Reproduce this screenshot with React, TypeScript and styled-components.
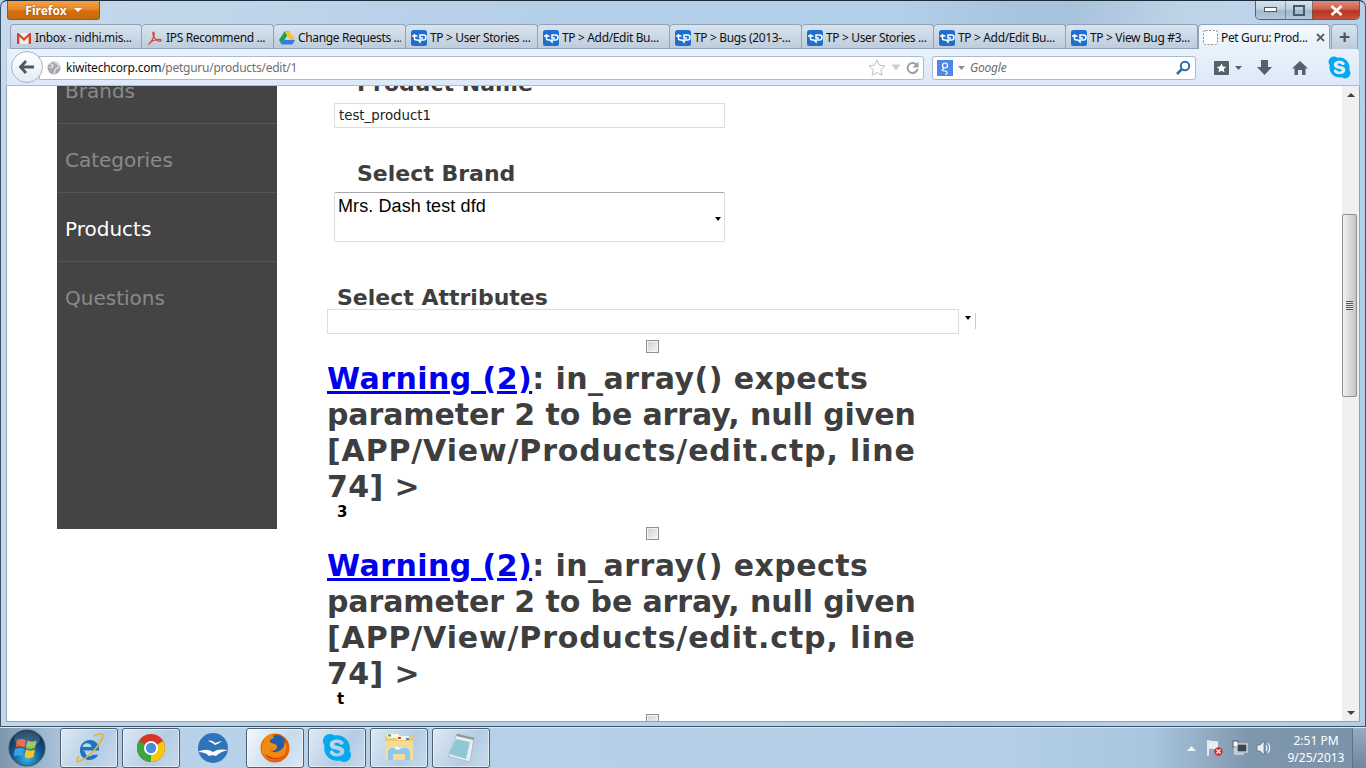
import React from 'react';
import styled, { createGlobalStyle } from 'styled-components';
import { FaSkype } from 'react-icons/fa';

const GlobalStyle = createGlobalStyle`
  html, body { margin: 0; padding: 0; height: 100%; overflow: hidden; }
  body { font-family: "DejaVu Sans", sans-serif; background: #b4cfe8; }
  * { box-sizing: border-box; }
`;

const Desktop = styled.div`
  width: 1366px;
  height: 768px;
  display: flex;
  flex-direction: column;
  overflow: hidden;
`;

const Win = styled.div`
  height: 727px;
  display: flex;
  flex-direction: column;
  padding: 0 5px 4px;
  border-top: 1px solid #1d2a38;
  border-left: 1px solid #3e5266;
  border-right: 1px solid #3e5266;
  border-bottom: 1px solid #3e5266;
  border-radius: 7px 7px 0 0;
  background:
    linear-gradient(115deg, transparent 0 60%, rgba(255,255,255,.18) 70%, transparent 78%),
    linear-gradient(100deg, #c6d9ec 0%, #b6d0e8 35%, #b4cfe8 60%, #a3bfd9 72%, #b8d2ea 85%, #b2cde6 100%);
`;

const TitleBar = styled.div`
  height: 23px;
  display: flex;
  justify-content: space-between;
  align-items: flex-start;
  flex: none;
`;

const FirefoxMenu = styled.div`
  width: 93px;
  height: 19px;
  margin-left: 1px;
  display: flex;
  align-items: center;
  justify-content: center;
  gap: 7px;
  border: 1px solid #8d5a22;
  border-top: none;
  border-radius: 0 0 3px 3px;
  background: linear-gradient(#f3a14b 0%, #e9882a 45%, #d46f0e 55%, #c96a0d 100%);
  color: #fff;
  font: bold 12px "Noto Sans", sans-serif;
  text-shadow: 0 0 2px #8d4a08;
`;

const MenuCaret = styled.span`
  width: 0;
  height: 0;
  border-left: 4px solid transparent;
  border-right: 4px solid transparent;
  border-top: 4px solid #fff;
`;

const WinControls = styled.div`
  display: flex;
  height: 19px;
  margin-right: 0;
  border: 1px solid #4d6378;
  border-top: none;
  border-radius: 0 0 5px 5px;
  overflow: hidden;
`;

const WinButton = styled.div<{ $close?: boolean; $w: number }>`
  width: ${(p) => p.$w}px;
  display: flex;
  align-items: center;
  justify-content: center;
  border-left: 1px solid rgba(70, 90, 110, 0.5);
  background: ${(p) =>
    p.$close
      ? 'linear-gradient(#dd8a7c 0%, #cf5f4d 45%, #b93420 55%, #c4513a 100%)'
      : 'linear-gradient(#d7e3ef 0%, #bccfe1 45%, #a2b8cd 55%, #b6c9da 100%)'};
  &:first-child { border-left: none; }
`;

const TabStrip = styled.div`
  height: 25px;
  display: flex;
  padding-left: 4px;
  flex: none;
`;

const Tab = styled.div<{ $active?: boolean }>`
  width: 132px;
  height: 25px;
  display: flex;
  align-items: center;
  gap: 3px;
  padding: 1px 4px 0 ${(p) => (p.$active ? 4 : 5)}px;
  border: 1px solid #8ea3b8;
  border-left-width: ${(p) => (p.$active ? 1 : 0)}px;
  border-bottom: none;
  border-radius: 4px 4px 0 0;
  background: ${(p) =>
    p.$active ? 'linear-gradient(#f3f8fd, #e8f1fb)' : 'linear-gradient(#d9e4ef, #bccbdb)'};
  box-shadow: ${(p) => (p.$active ? 'none' : 'inset 0 -1px 0 #8fa5ba')};
  font: 12px "Noto Sans", sans-serif;
  letter-spacing: -0.35px;
  color: #111;
  white-space: nowrap;
  &:first-child { border-left-width: 1px; }
`;

const TabLabel = styled.span`
  flex: 1;
  overflow: hidden;
`;

const NewTab = styled.div`
  width: 27px;
  height: 25px;
  margin-left: 1px;
  display: flex;
  align-items: center;
  justify-content: center;
  border: 1px solid #8ea3b8;
  border-bottom: none;
  border-radius: 4px 4px 0 0;
  background: linear-gradient(#d9e4ef, #bccbdb);
  font: bold 19px "Liberation Sans", sans-serif;
  color: #4a5460;
`;

const Toolbar = styled.div`
  height: 37px;
  flex: none;
  display: flex;
  align-items: center;
  gap: 8px;
  padding: 1px 0 0 32px;
  position: relative;
  border: 1px solid #b4c8dc;
  border-top: none;
  border-bottom: 1px solid #a4bfda;
  border-radius: 0 4px 0 0;
  background: linear-gradient(#e9f2fc, #dce9f8);
`;

const BackButton = styled.div`
  position: absolute;
  left: 4px;
  top: 2px;
  width: 32px;
  height: 32px;
  border-radius: 50%;
  border: 1px solid #a4b6c8;
  background: linear-gradient(#fff, #e5ecf4);
  display: flex;
  align-items: center;
  justify-content: center;
`;

const UrlBar = styled.div`
  width: 885px;
  height: 24px;
  display: flex;
  align-items: center;
  padding: 0 4px 0 7px;
  background: #fff;
  border: 1px solid #a9bccf;
  border-radius: 0 3px 3px 0;
  font: 12px "Noto Sans", sans-serif;
  letter-spacing: -0.25px;
`;

const Host = styled.span`
  color: #111;
  margin-left: 5px;
`;

const UrlPath = styled.span`
  color: #6f6f6f;
  flex: 1;
`;

const UrlIcons = styled.div`
  display: flex;
  align-items: center;
  gap: 5px;
`;

const SearchBar = styled.div`
  width: 264px;
  height: 24px;
  display: flex;
  align-items: center;
  gap: 5px;
  padding: 0 4px 0 4px;
  background: #fff;
  border: 1px solid #a9bccf;
  border-radius: 3px;
`;

const SearchHint = styled.span`
  flex: 1;
  font: italic 12px "Noto Sans", sans-serif;
  letter-spacing: -0.2px;
  color: #6d6d6d;
`;

const ToolIcons = styled.div`
  display: flex;
  align-items: center;
  margin-left: 5px;
  gap: 0;
`;

const ToolSlot = styled.div<{ $w: number }>`
  width: ${(p) => p.$w}px;
  display: flex;
  justify-content: center;
  align-items: center;
`;

const Viewport = styled.div`
  flex: 1;
  min-height: 0;
  display: flex;
  background: #fff;
  border: 1px solid #8ea3b8;
  border-top: none;
`;

const PageClip = styled.div`
  flex: 1;
  overflow: hidden;
`;

const Page = styled.div`
  display: flex;
  align-items: flex-start;
  padding-left: 50px;
  gap: 50px;
  margin-top: -31px;
`;

const Sidebar = styled.nav`
  width: 220px;
  height: 474px;
  flex: none;
  background: #444444;
`;

const NavItem = styled.div<{ $current?: boolean }>`
  height: 69px;
  display: flex;
  align-items: center;
  padding: 4px 0 0 8px;
  border-bottom: 1px solid #555;
  font-size: 20px;
  color: ${(p) => (p.$current ? '#ffffff' : '#8a8a8a')};
  &:last-child { border-bottom-color: transparent; }
`;

const Main = styled.main`
  width: 649px;
  flex: none;
  color: #3e3e3e;
`;

const FieldLabel = styled.h2<{ $indent: number; $top: number }>`
  margin: ${(p) => p.$top}px 0 0 ${(p) => p.$indent}px;
  font-size: 22px;
  line-height: 26px;
  font-weight: bold;
  color: #3e3e3e;
`;

const TextInput = styled.input`
  display: block;
  width: 391px;
  height: 25px;
  margin: 6px 0 0 7px;
  padding: 0 4px;
  border: 1px solid #dddddd;
  outline: none;
  font: 13.33px "DejaVu Sans", sans-serif;
  color: #222;
`;

const BrandSelect = styled.div`
  width: 391px;
  height: 50px;
  margin: 5px 0 0 7px;
  padding: 2px 3px;
  position: relative;
  border: 1px solid #dddddd;
  border-top-color: #a9a9a9;
  border-radius: 2px;
  font: 18px/22px "Liberation Sans", sans-serif;
  letter-spacing: 0.1px;
  color: #000;
`;

const Caret = styled.span`
  position: absolute;
  right: 3px;
  top: 24px;
  width: 0;
  height: 0;
  border-left: 3px solid transparent;
  border-right: 3px solid transparent;
  border-top: 4px solid #000;
`;

const AttrRow = styled.div`
  display: flex;
  height: 25px;
  margin-top: -2px;
`;

const AttrField = styled.div`
  width: 632px;
  height: 25px;
  border: 1px solid #dddddd;
`;

const AttrArrow = styled.div`
  width: 17px;
  height: 16px;
  border-right: 1px solid #ccc;
  margin-top: 4px;
  position: relative;
  ${Caret} { left: 6px; right: auto; top: 3px; }
`;

const CheckLine = styled.div`
  display: flex;
  justify-content: center;
  height: 13px;
  margin-top: 6px;
  padding-left: 1px;
`;

const Check = styled.input`
  appearance: none;
  width: 13px;
  height: 13px;
  margin: 0;
  border: 1px solid #8e8f8f;
  background: linear-gradient(135deg, #d0d0d0, #f6f6f6);
  box-shadow: inset 0 0 0 1px #f4f4f4;
`;

const WarningText = styled.div`
  margin-top: 8px;
  font-size: 30px;
  line-height: 36px;
  font-weight: bold;
  color: #3e3e3e;
  a { color: #0000ee; text-decoration: underline; }
`;

const WarningLine = styled.div<{ $track: number }>`
  white-space: nowrap;
  letter-spacing: ${(p) => p.$track}px;
`;

const OptionValue = styled.div`
  margin-left: 10px;
  height: 16px;
  font: bold 15px/14px "DejaVu Sans", sans-serif;
  color: #000;
`;

const Scrollbar = styled.div`
  width: 17px;
  flex: none;
  display: flex;
  flex-direction: column;
  align-items: center;
  background: #f0f0f0;
  position: relative;
`;

const ArrowZone = styled.div`
  height: 17px;
  flex: none;
  display: flex;
  align-items: center;
  justify-content: center;
`;

const ArrowGlyph = styled.span<{ $up?: boolean }>`
  width: 0;
  height: 0;
  border-left: 4px solid transparent;
  border-right: 4px solid transparent;
  ${(p) => (p.$up ? 'border-bottom: 4px solid #404040;' : 'border-top: 4px solid #404040;')}
`;

const ThumbTrack = styled.div`
  flex: 1;
  width: 100%;
  padding-top: 111px;
`;

const Thumb = styled.div`
  width: 15px;
  height: 183px;
  border: 1px solid #8e8f8f;
  border-radius: 2px;
  background: linear-gradient(90deg, #f2f2f2, #d8d8d8 55%, #c4c4c4);
  display: flex;
  align-items: center;
  justify-content: center;
`;

const Grip = styled.div`
  width: 7px;
  height: 9px;
  background: repeating-linear-gradient(#555 0 1px, #e8e8e8 1px 2px);
`;

const Taskbar = styled.div`
  flex: 1;
  display: flex;
  align-items: stretch;
  position: relative;
  border-top: 1px solid #dbe8f4;
  background: linear-gradient(90deg, #7f97ac 0, #a9c3da 60px, #b8d2ea 160px, #b6d0e8 600px, #b4cfe7 1000px, #a9c6e0 1150px, #7f97ad 1250px, #7b92a8 1366px);
`;

const StartOrb = styled.div`
  width: 54px;
  flex: none;
  margin-right: 6px;
  display: flex;
  align-items: center;
  justify-content: center;
`;

const PinnedRow = styled.div`
  display: flex;
  gap: 4px;
`;

const PinButton = styled.div<{ $running?: boolean; $active?: boolean }>`
  width: 58px;
  display: flex;
  align-items: center;
  justify-content: center;
  margin-top: 0;
  border-radius: 3px;
  ${(p) =>
    p.$running
      ? `border: 1px solid #4c5e70;
         box-shadow: inset 0 0 0 1px rgba(255,255,255,.5);
         background: linear-gradient(120deg, ${p.$active ? '#f4f8fc, #c6dbee 60%, #dbe8f4' : '#dde9f5, #b4cde4 60%, #c6daec'});`
      : ''}
`;

const Tray = styled.div`
  margin-left: auto;
  display: flex;
  align-items: center;
`;

const TrayIcon = styled.div<{ $w: number }>`
  width: ${(p) => p.$w}px;
  display: flex;
  justify-content: center;
`;

const Clock = styled.div`
  width: 72px;
  padding-top: 2px;
  text-align: center;
  font: 12px/17px "Noto Sans", sans-serif;
  color: #fff;
`;

const ShowDesktop = styled.div`
  width: 14px;
  align-self: stretch;
  border-left: 1px solid #5d7084;
  border-top: 1px solid #97adc0;
  background: linear-gradient(#94aabd, #6f879c);
`;

const TpIcon = () => (
  <svg width="16" height="16" viewBox="0 0 16 16" style={{ flex: 'none' }}>
    <rect width="16" height="16" rx="2.5" fill="#1f6fd0" />
    <path d="M1 6h5.500M3.500 4v4.500c0 1.200.8 1.500 2 1.500H7l2 2v-2h3.500c1.500 0 2.500-1 2.500-2.500S14 5 12.500 5H9v3h3" fill="none" stroke="#fff" strokeWidth="1.500" />
  </svg>
);

const GmailIcon = () => (
  <svg width="16" height="16" viewBox="0 0 16 16" style={{ flex: 'none' }}>
    <rect x="1" y="3" width="14" height="11" fill="#f1ede6" />
    <path d="M1 14V3h1.600L8 8l5.400-5H15v11h-2.400V6.600L8 11 3.400 6.600V14z" fill="#d8412f" />
  </svg>
);

const PdfIcon = () => (
  <svg width="16" height="16" viewBox="0 0 16 16" style={{ flex: 'none' }}>
    <path d="M1.500 14.500C3.500 13 6 9 7 5c.3-1.500.2-3-.6-3s-.7 2 .2 4c1 2.300 3 4.500 5 5 2 .4 3-.3 2.500-1-.6-.8-4-.6-7 .3-2.200.6-4.500 2.200-5.600 4.200z" fill="none" stroke="#e0392b" strokeWidth="1.100" />
  </svg>
);

const DriveIcon = () => (
  <svg width="16" height="16" viewBox="0 0 16 16" style={{ flex: 'none' }}>
    <path d="M5.500 1.500h5L5.200 10.500 2.700 14.500 0 10z" fill="#18a05e" />
    <path d="M10.500 1.500 16 10h-5.200L5.500 1.500z" fill="#fbc02d" />
    <path d="M5.200 10H16l-2.700 4.500H2.700z" fill="#3b78e7" />
  </svg>
);

const SkypeGlyph = ({ size }: { size: number }) => <FaSkype size={size} color="#04a9ee" />;

const StarIcon = () => (
  <svg width="18" height="17" viewBox="0 0 18 17">
    <path d="M9 1l2.400 5.200 5.600.7-4.100 3.800 1.100 5.600L9 13.500l-5 2.800 1.100-5.600L1 6.900l5.600-.7z" fill="#fff" stroke="#b9bec4" />
  </svg>
);

const ChromeIcon = () => (
  <svg width="30" height="30" viewBox="0 0 30 30">
    <circle cx="15" cy="15" r="14" fill="#d9352a" />
    <path d="M15 15 27.100 8A14 14 0 0 1 15 29z" fill="#f6c911" />
    <path d="M15 15 15 29A14 14 0 0 1 2.900 8z" fill="#3da63f" />
    <circle cx="15" cy="15" r="7" fill="#fff" />
    <circle cx="15" cy="15" r="5.200" fill="#4a8be0" />
  </svg>
);

const IeIcon = () => (
  <svg width="32" height="32" viewBox="0 0 32 32">
    <path d="M9 18.500h17c.6-6-3.500-10.500-9-10.500-5.800 0-10 4.500-10 10.500 0 5.500 4 9.500 9.500 9.500 4 0 7-2 8.700-5.200h-5.500c-.8 1-1.900 1.500-3.200 1.500-2.700 0-4.500-2-4.500-4.800zm.5-3.600c.4-2.200 2.100-3.700 4.500-3.700s4.300 1.500 4.600 3.700z" fill="#1c74c4" />
    <path d="M6 24C2 31 3 31 9 28 17 24 28 12 30 4c.5-3-4-3-9 0" fill="none" stroke="#e5b33a" strokeWidth="1.600" />
  </svg>
);

const OpenOfficeIcon = () => (
  <svg width="30" height="30" viewBox="0 0 30 30">
    <circle cx="15" cy="15" r="15" fill="#2f73b8" />
    <path d="M0 19c6-3 10-3 15 0 4-3 9-3 15-2-5 1-9 3-12 6-3-1-5-1-7 0-3-3-6-4-11-4z" fill="#fff" />
    <path d="M10 8c3-1 5 0 7 2 2-1 4-1 7-2-2 2-5 3-7 4-2-2-4-3-7-4z" fill="#fff" />
  </svg>
);

const FirefoxIcon = () => (
  <svg width="30" height="30" viewBox="0 0 30 30">
    <circle cx="15" cy="15" r="14.500" fill="#e66000" />
    <circle cx="17" cy="11" r="9" fill="#1f5fa8" />
    <path d="M3 10C4 4 9 1 13 1c-1 2 0 3 2 4-3 0-5 1-5 4 1 2 6 1 7 4 .5 4-4 6-7 4 2 3 8 3 12-1 2-2 3-5 2-8 3 3 3 9 0 14-4 6-13 7-19 2C1 20 1 15 3 10z" fill="#f28a12" />
    <path d="M5 22c5 6 14 6 19 0-4 3-9 4-13 2-3-1-5-3-6-2z" fill="#c8420e" />
  </svg>
);

const FolderIcon = () => (
  <svg width="32" height="32" viewBox="0 0 32 32">
    <path d="M2 4h28v24H2z" fill="#e9c877" />
    <rect x="4" y="2" width="12" height="4" fill="#fbf6df" />
    <rect x="5" y="2.500" width="3" height="2" fill="#22b14c" />
    <rect x="14" y="4" width="12" height="4" fill="#fbf6df" />
    <rect x="15" y="5" width="3" height="2" fill="#d8412f" />
    <rect x="23" y="6" width="3" height="2" fill="#2f8fdc" />
    <path d="M2 9h28v19H2z" fill="#f3dc97" />
    <path d="M5 28v-7c0-3 2-5 5-5h12c3 0 5 2 5 5v7h-5v-6H10v6z" fill="#8cc9ef" />
    <path d="M11 16l3-2 1 2 4 0-4 2z" fill="#fff" />
  </svg>
);

const NotepadIcon = () => (
  <svg width="32" height="32" viewBox="0 0 32 32">
    <path d="M12 2 29 6 25 30 3 24z" fill="#e9eef2" stroke="#9aa7b0" strokeWidth=".6" />
    <path d="M11 7 25 10 21 27 4 22z" fill="#8fc7d6" />
    <path d="M12 2 29 6 28.500 8 11.500 4z" fill="#8a949c" />
  </svg>
);

const WindowsOrb = () => (
  <svg width="38" height="38" viewBox="0 0 38 38">
    <defs>
      <radialGradient id="orbFill" cx="50%" cy="78%" r="70%">
        <stop offset="0" stopColor="#37b8e8" />
        <stop offset=".55" stopColor="#14598f" />
        <stop offset="1" stopColor="#0b2f52" />
      </radialGradient>
    </defs>
    <circle cx="19" cy="19" r="18" fill="url(#orbFill)" stroke="#34506a" />
    <path d="M9 11c3-1.500 6-1.500 9 0l-1.500 7.500c-3-1.500-6-1.500-9 0z" fill="#e8562a" />
    <path d="M19.500 11.500c3 1.500 6 1.500 9 0L27 19c-3 1.500-6 1.500-9 0z" fill="#8cc63f" />
    <path d="M7 20c3-1.500 6-1.500 9 0l-1.500 7.500c-3-1.500-6-1.500-9 0z" fill="#3aa0e0" />
    <path d="M18 20.500c3 1.500 6 1.500 9 0L25.500 28c-3 1.500-6 1.500-9 0z" fill="#f7c325" />
    <ellipse cx="19" cy="10" rx="13" ry="8" fill="#fff" opacity=".16" />
  </svg>
);

const tabs = [
  { label: 'Inbox - nidhi.mis...', icon: <GmailIcon /> },
  { label: 'IPS Recommend ...', icon: <PdfIcon /> },
  { label: 'Change Requests ...', icon: <DriveIcon /> },
  { label: 'TP > User Stories ...', icon: <TpIcon /> },
  { label: 'TP > Add/Edit Bu...', icon: <TpIcon /> },
  { label: 'TP > Bugs (2013-...', icon: <TpIcon /> },
  { label: 'TP > User Stories ...', icon: <TpIcon /> },
  { label: 'TP > Add/Edit Bu...', icon: <TpIcon /> },
  { label: 'TP > View Bug #3...', icon: <TpIcon /> },
];

const navItems = ['Brands', 'Categories', 'Products', 'Questions'];

const Warning = () => (
  <WarningText>
    <WarningLine $track={0.45}>
      <a href="#warning">Warning (2)</a>: in_array() expects
    </WarningLine>
    <WarningLine $track={-0.1}>parameter 2 to be array, null given</WarningLine>
    <WarningLine $track={0.85}>[APP/View/Products/edit.ctp, line</WarningLine>
    <WarningLine $track={0.4}>74] &gt;</WarningLine>
  </WarningText>
);

export default function App() {
  return (
    <Desktop>
      <GlobalStyle />
      <Win>
        <TitleBar>
          <FirefoxMenu>
            Firefox
            <MenuCaret />
          </FirefoxMenu>
          <WinControls>
            <WinButton $w={29}>
              <svg width="13" height="6"><rect x=".5" y=".5" width="12" height="4" fill="#fff" stroke="#4a5a6a" /></svg>
            </WinButton>
            <WinButton $w={27}>
              <svg width="12" height="11"><rect x="1" y="1" width="10" height="9" fill="none" stroke="#4a5a6a" strokeWidth="2" /></svg>
            </WinButton>
            <WinButton $close $w={47}>
              <svg width="13" height="11" viewBox="0 0 13 11"><path d="M1.500 1l10 9M11.500 1l-10 9" stroke="#fff" strokeWidth="2.600" /></svg>
            </WinButton>
          </WinControls>
        </TitleBar>
        <TabStrip>
          {tabs.map((t, i) => (
            <Tab key={i}>
              {t.icon}
              <TabLabel>{t.label}</TabLabel>
            </Tab>
          ))}
          <Tab $active>
            <svg width="15" height="15" style={{ flex: 'none' }}>
              <rect x=".5" y=".5" width="14" height="14" rx="2" fill="#fff" stroke="#8a8a8a" strokeDasharray="2 1.500" />
            </svg>
            <TabLabel>Pet Guru: Prod...</TabLabel>
            <svg width="9" height="9" viewBox="0 0 9 9" style={{ flex: 'none' }}>
              <path d="M1 1l7 7M8 1L1 8" stroke="#5a6068" strokeWidth="1.800" />
            </svg>
          </Tab>
          <NewTab>+</NewTab>
        </TabStrip>
        <Toolbar>
          <BackButton>
            <svg width="16" height="14" viewBox="0 0 16 14">
              <path d="M7 1 1.500 7 7 13M2 7h13" fill="none" stroke="#4b5966" strokeWidth="2.800" />
            </svg>
          </BackButton>
          <UrlBar>
            <svg width="14" height="14" viewBox="0 0 14 14">
              <circle cx="7" cy="7" r="6.500" fill="#a5a9ad" />
              <path d="M3 3c2 0 3 1 3 2S4 7 3 6M8 1c1 2 4 2 4 4S9 7 8 9s0 3-1 4" fill="none" stroke="#dfe2e5" strokeWidth="1.500" />
            </svg>
            <Host>kiwitechcorp.com</Host>
            <UrlPath>/petguru/products/edit/1</UrlPath>
            <UrlIcons>
              <StarIcon />
              <svg width="10" height="7"><path d="M.5.5h9L5 6.500z" fill="#c9ced3" /></svg>
              <svg width="13" height="13" viewBox="0 0 13 13">
                <path d="M11 4.500A5 5 0 1 0 11.500 8" fill="none" stroke="#9aa0a6" strokeWidth="2" />
                <path d="M12.500 .5v6h-6z" fill="#9aa0a6" />
              </svg>
            </UrlIcons>
          </UrlBar>
          <SearchBar>
            <svg width="16" height="16" viewBox="0 0 16 16" style={{ flex: 'none' }}>
              <rect width="16" height="16" fill="#4d88e8" />
              <circle cx="8" cy="5.500" r="2.500" fill="none" stroke="#fff" strokeWidth="1.200" />
              <path d="M7 8c-3 2-2 3 1 3 3 .5 3 3 0 3.500" fill="none" stroke="#fff" strokeWidth="1.200" />
            </svg>
            <svg width="7" height="4"><path d="M0 0h7L3.500 4z" fill="#8a9199" /></svg>
            <SearchHint>Google</SearchHint>
            <svg width="16" height="16" viewBox="0 0 16 16">
              <circle cx="10" cy="6" r="4.200" fill="none" stroke="#2e6ea8" strokeWidth="2" />
              <path d="M7 9l-5 5" stroke="#2e6ea8" strokeWidth="2.600" />
            </svg>
          </SearchBar>
          <ToolIcons>
            <ToolSlot $w={40}>
              <svg width="30" height="14" viewBox="0 0 30 14">
                <rect x="0" y="0" width="15" height="14" rx="1" fill="#55606c" />
                <path d="M7.500 2.500l1.500 3 3.200.4-2.300 2.200.6 3.200-3-1.600-3 1.600.6-3.200L2.800 5.900 6 5.500z" fill="#fff" />
                <path d="M21 5h7l-3.500 4z" fill="#55606c" />
              </svg>
            </ToolSlot>
            <ToolSlot $w={30}>
              <svg width="15" height="15" viewBox="0 0 15 15"><path d="M4 0h7v7h4l-7.500 8L0 7h4z" fill="#55606c" /></svg>
            </ToolSlot>
            <ToolSlot $w={42}>
              <svg width="16" height="14" viewBox="0 0 16 14">
                <path d="M8 0 0 7.500h2.500V14H6V9h4v5h3.500V7.500H16z" fill="#55606c" />
              </svg>
            </ToolSlot>
            <ToolSlot $w={36}>
              <SkypeGlyph size={25} />
            </ToolSlot>
          </ToolIcons>
        </Toolbar>
        <Viewport>
          <PageClip>
            <Page>
              <Sidebar>
                {navItems.map((n) => (
                  <NavItem key={n} $current={n === 'Products'}>{n}</NavItem>
                ))}
              </Sidebar>
              <Main>
                <FieldLabel $indent={30} $top={16}>Product Name</FieldLabel>
                <TextInput readOnly value="test_product1" />
                <FieldLabel $indent={30} $top={33}>Select Brand</FieldLabel>
                <BrandSelect>
                  Mrs. Dash test dfd
                  <Caret />
                </BrandSelect>
                <FieldLabel $indent={10} $top={43}>Select Attributes</FieldLabel>
                <AttrRow>
                  <AttrField />
                  <AttrArrow><Caret /></AttrArrow>
                </AttrRow>
                <CheckLine><Check type="checkbox" readOnly /></CheckLine>
                <Warning />
                <OptionValue>3</OptionValue>
                <CheckLine><Check type="checkbox" readOnly /></CheckLine>
                <Warning />
                <OptionValue>t</OptionValue>
                <CheckLine><Check type="checkbox" readOnly /></CheckLine>
              </Main>
            </Page>
          </PageClip>
          <Scrollbar>
            <ArrowZone><ArrowGlyph $up /></ArrowZone>
            <ThumbTrack>
              <Thumb><Grip /></Thumb>
            </ThumbTrack>
            <ArrowZone><ArrowGlyph /></ArrowZone>
          </Scrollbar>
        </Viewport>
      </Win>
      <Taskbar>
        <StartOrb><WindowsOrb /></StartOrb>
        <PinnedRow>
          <PinButton $running><IeIcon /></PinButton>
          <PinButton $running><ChromeIcon /></PinButton>
          <PinButton><OpenOfficeIcon /></PinButton>
          <PinButton $running $active><FirefoxIcon /></PinButton>
          <PinButton $running><SkypeGlyph size={32} /></PinButton>
          <PinButton $running><FolderIcon /></PinButton>
          <PinButton $running><NotepadIcon /></PinButton>
        </PinnedRow>
        <Tray>
          <TrayIcon $w={14}>
            <svg width="9" height="5"><path d="M0 5 4.500 0 9 5z" fill="#eef3f8" /></svg>
          </TrayIcon>
          <TrayIcon $w={34}>
            <svg width="16" height="16" viewBox="0 0 16 16">
              <path d="M1 0v16" stroke="#fff" strokeWidth="1.500" />
              <path d="M2 1c3-1 6 1 9 0v8c-3 1-6-1-9 0z" fill="#e8edf2" />
              <circle cx="11.500" cy="11.500" r="4.200" fill="#d22d2d" />
              <path d="M9.500 9.500l4 4M13.500 9.500l-4 4" stroke="#fff" strokeWidth="1.200" />
            </svg>
          </TrayIcon>
          <TrayIcon $w={16}>
            <svg width="16" height="16" viewBox="0 0 16 16">
              <rect x="1" y="1" width="5" height="6" fill="#f4f6f8" stroke="#333" strokeWidth=".7" />
              <rect x="5" y="4" width="10" height="8" fill="#3c4650" stroke="#f4f6f8" />
              <path d="M3 7v7h9" fill="none" stroke="#f4f6f8" strokeWidth="1.200" />
            </svg>
          </TrayIcon>
          <TrayIcon $w={32}>
            <svg width="16" height="16" viewBox="0 0 16 16">
              <path d="M1 5h3l4-4v14l-4-4H1z" fill="#e8edf2" stroke="#4a5a6a" strokeWidth=".6" />
              <path d="M10 5c1 2 1 4 0 6M12 3c2 3 2 7 0 10" fill="none" stroke="#eef3f8" strokeWidth="1.200" />
            </svg>
          </TrayIcon>
          <Clock>
            2:51 PM
            <br />
            9/25/2013
          </Clock>
          <ShowDesktop />
        </Tray>
      </Taskbar>
    </Desktop>
  );
}
